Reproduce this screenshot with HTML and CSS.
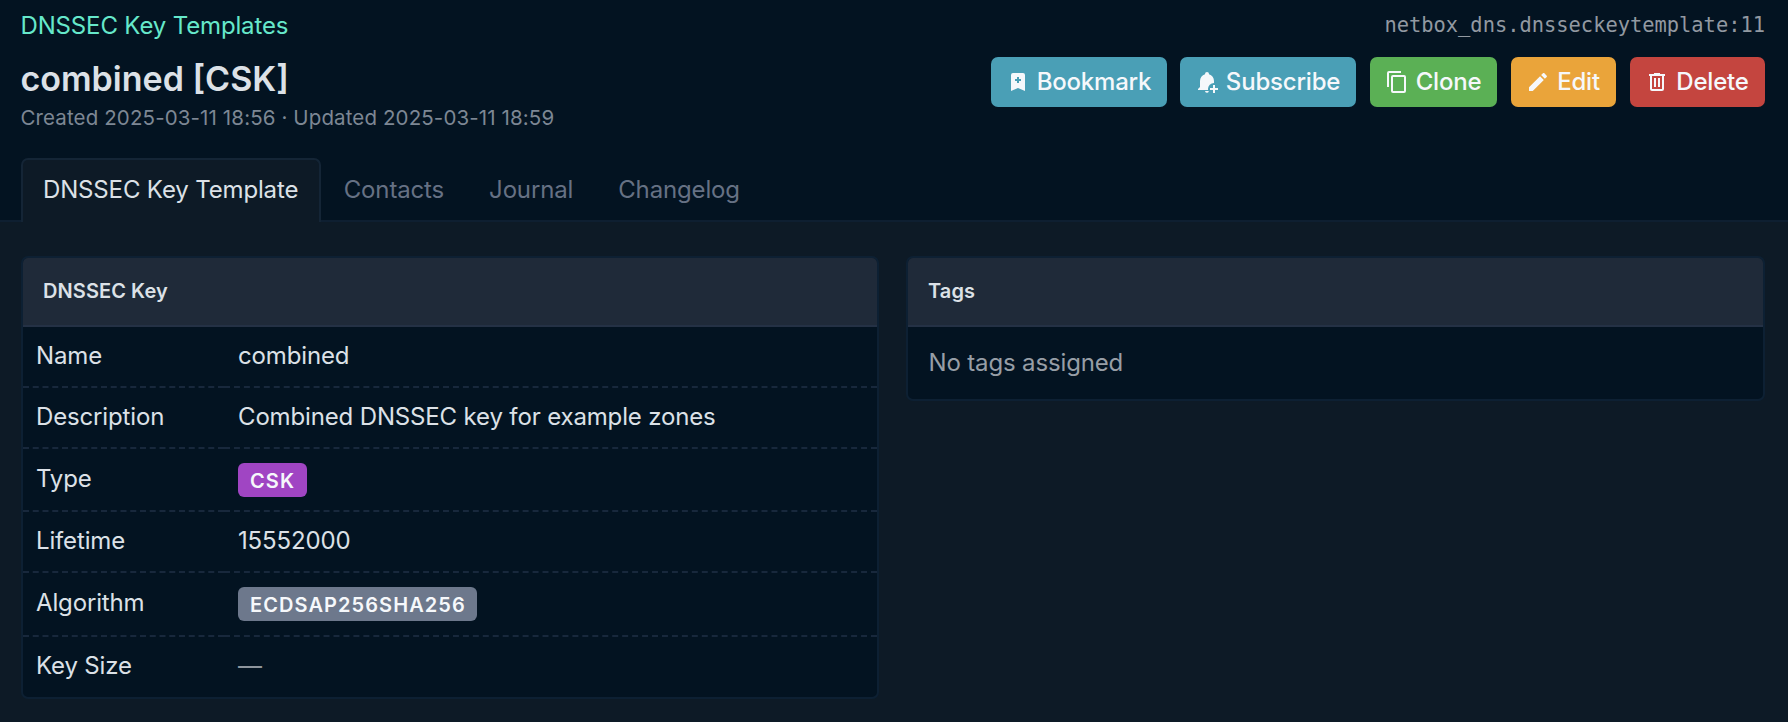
FILE: index.html
```html
<!DOCTYPE html>
<html lang="en">
<head>
<meta charset="utf-8">
<title>combined [CSK] | NetBox</title>
<link rel="stylesheet" href="styles.css">
</head>
<body>
<header class="page-header">
  <div class="top-row">
    <a class="breadcrumb">DNSSEC Key Templates</a>
    <code class="object-id">netbox_dns.dnsseckeytemplate:11</code>
  </div>
  <div class="title-row">
    <div class="heading">
      <h1 class="title">combined [CSK]</h1>
      <div class="subtitle">Created 2025-03-11 18:56 · Updated 2025-03-11 18:59</div>
    </div>
    <div class="actions">
      <button class="btn btn-cyan btn-bookmark"><svg class="icon" viewBox="0 0 24 24"><path d="M17 3a2 2 0 0 1 2 2v16l-7-3l-7 3V5a2 2 0 0 1 2-2zm-6 4v2H9v2h2v2h2v-2h2V9h-2V7z"/></svg><span>Bookmark</span></button>
      <button class="btn btn-cyan btn-subscribe"><svg class="icon" viewBox="0 0 24 24"><path d="M10 21h3.500a6 6 0 0 0 .3.600A2 2 0 0 1 10 21zM13 19a6 6 0 0 1 6-6V11c0-3.100-2-5.800-5-6.700V4a2 2 0 0 0-4 0v.3c-3 .9-5 3.600-5 6.700v6l-2 2v1h10.100a6 6 0 0 1-.1-1zM20 15v3h3v2h-3v3h-2v-3h-3v-2h3v-3z"/></svg><span>Subscribe</span></button>
      <button class="btn btn-green"><svg class="icon" viewBox="0 0 24 24"><path d="M19 21H8V7h11m0-2H8a2 2 0 0 0-2 2v14a2 2 0 0 0 2 2h11a2 2 0 0 0 2-2V7a2 2 0 0 0-2-2m-3-4H4a2 2 0 0 0-2 2v14h2V3h12z"/></svg><span>Clone</span></button>
      <button class="btn btn-yellow"><svg class="icon" viewBox="0 0 24 24"><path d="M20.710 7.040c.39-.39.39-1.040 0-1.410l-2.340-2.340c-.37-.39-1.020-.39-1.410 0l-1.840 1.830l3.750 3.750M3 17.250V21h3.750L17.810 9.930l-3.750-3.750z"/></svg><span>Edit</span></button>
      <button class="btn btn-red"><svg class="icon" viewBox="0 0 24 24"><path d="M9 3v1H4v2h1v13a2 2 0 0 0 2 2h10a2 2 0 0 0 2-2V6h1V4h-5V3zM7 6h10v13H7zm2 2v9h2V8zm4 0v9h2V8z"/></svg><span>Delete</span></button>
    </div>
  </div>
  <nav class="tabs">
    <a class="tab active">DNSSEC Key Template</a>
    <a class="tab">Contacts</a>
    <a class="tab">Journal</a>
    <a class="tab">Changelog</a>
  </nav>
</header>
<main class="content">
  <section class="card">
    <h2 class="card-header">DNSSEC Key</h2>
    <table class="attrs">
      <tr><th>Name</th><td>combined</td></tr>
      <tr><th>Description</th><td>Combined DNSSEC key for example zones</td></tr>
      <tr class="tall"><th>Type</th><td><span class="badge purple">CSK</span></td></tr>
      <tr><th>Lifetime</th><td>15552000</td></tr>
      <tr class="taller"><th>Algorithm</th><td><span class="badge gray">ECDSAP256SHA256</span></td></tr>
      <tr class="last"><th>Key Size</th><td><span class="muted">—</span></td></tr>
    </table>
  </section>
  <section class="card">
    <h2 class="card-header">Tags</h2>
    <div class="card-body">No tags assigned</div>
  </section>
</main>
</body>
</html>
```
FILE: styles.css
```css
* { box-sizing: border-box; }
body {
  margin: 0;
  height: 722px;
  overflow: hidden;
  background: #0d1a26;
  color: #dce1e7;
  font: 400 24px/34px Inter, "Liberation Sans", sans-serif;
  letter-spacing: -0.15px;
}
.page-header {
  height: 222px;
  padding: 8px 23px 0 21px;
  background: #031321;
  border-bottom: 2px solid #0e1f31;
}
.top-row { display: flex; justify-content: space-between; height: 49px; }
.breadcrumb { padding-top: 1px; margin-left: -0.5px; color: #66e8cb; }
.object-id { font: 20.400px/34px "DejaVu Sans Mono", monospace; letter-spacing: 0; color: #9299a1; }
.title-row { display: flex; justify-content: space-between; height: 101px; }
.heading { margin-left: -0.5px; }
.title { margin: 0; font-size: 34px; line-height: 44px; font-weight: 600; letter-spacing: 0; }
.subtitle { font-size: 20.500px; line-height: 34px; letter-spacing: 0.12px; color: #7d8794; }
.actions { display: flex; gap: 14px; }
.btn {
  display: flex;
  align-items: center;
  justify-content: center;
  gap: 7px;
  height: 50px;
  padding: 0 16px 0 15px;
  border: 0;
  border-radius: 7px;
  color: #f6f8fb;
  font: 500 24px/34px Inter, "Liberation Sans", sans-serif;
  letter-spacing: -0.2px;
}
.btn-cyan { width: 176px; background: #4a9fb6; }
.btn-bookmark { margin-right: -1px; }
.btn-green { width: 127px; background: #5bb055; }
.btn-yellow { width: 105px; background: #eaa43a; }
.btn-red { width: 135px; background: #c4453f; }
.icon { width: 24px; height: 24px; flex: none; fill: currentColor; }
.tabs { display: flex; height: 64px; }
.tab {
  height: 64px;
  padding: 13px 20.500px 0;
  border: 2px solid transparent;
  border-bottom: 0;
  color: #667184;
}
.tab.active {
  padding: 13px 21px 0 20px;
  color: #dce1e7;
  background: #0d1a26;
  border-color: #142536;
  border-radius: 7px 7px 0 0;
}
.content {
  display: grid;
  grid-template-columns: 858px 859px;
  gap: 27px;
  align-items: start;
  padding: 34px 0 0 21px;
}
.card {
  overflow: hidden;
  background: #031321;
  border: 2px solid #0d2033;
  border-radius: 7px;
}
.card-header {
  margin: 0;
  height: 69px;
  padding: 16px 20px;
  background: #1f2a39;
  border-bottom: 2px solid #243145;
  font-size: 20px;
  line-height: 34px;
  font-weight: 600;
  letter-spacing: 0.080px;
}
.attrs { width: 100%; border-collapse: separate; border-spacing: 0; table-layout: fixed; }
.attrs tr { height: 61px; }
.attrs tr.tall { height: 63px; }
.attrs tr.taller { height: 64px; }
.attrs tr.last { height: 60px; }
.attrs th, .attrs td {
  padding: 12px 14px 0;
  text-align: left;
  vertical-align: top;
  font-weight: 400;
  border-bottom: 2px dashed #18283c;
}
.attrs th { width: 201px; padding-left: 13px; }
.attrs .tall th, .attrs .taller th { padding-top: 13px; }
.attrs .tall td, .attrs .taller td { padding-top: 14px; }
.attrs tr.last th, .attrs tr.last td { border-bottom: 0; }
.badge {
  display: inline-block;
  height: 34px;
  padding: 0 11.500px 0 12px;
  border-radius: 6px;
  color: #f6f8fb;
  font-size: 20px;
  line-height: 36px;
  font-weight: 600;
  letter-spacing: 1.080px;
  vertical-align: top;
}
.purple { background: #a045c3; }
.gray { background: #6d788c; }
.muted { color: #8e959d; }
.card-body { height: 72px; padding: 19px 20.500px; color: #979ea6; }
```
